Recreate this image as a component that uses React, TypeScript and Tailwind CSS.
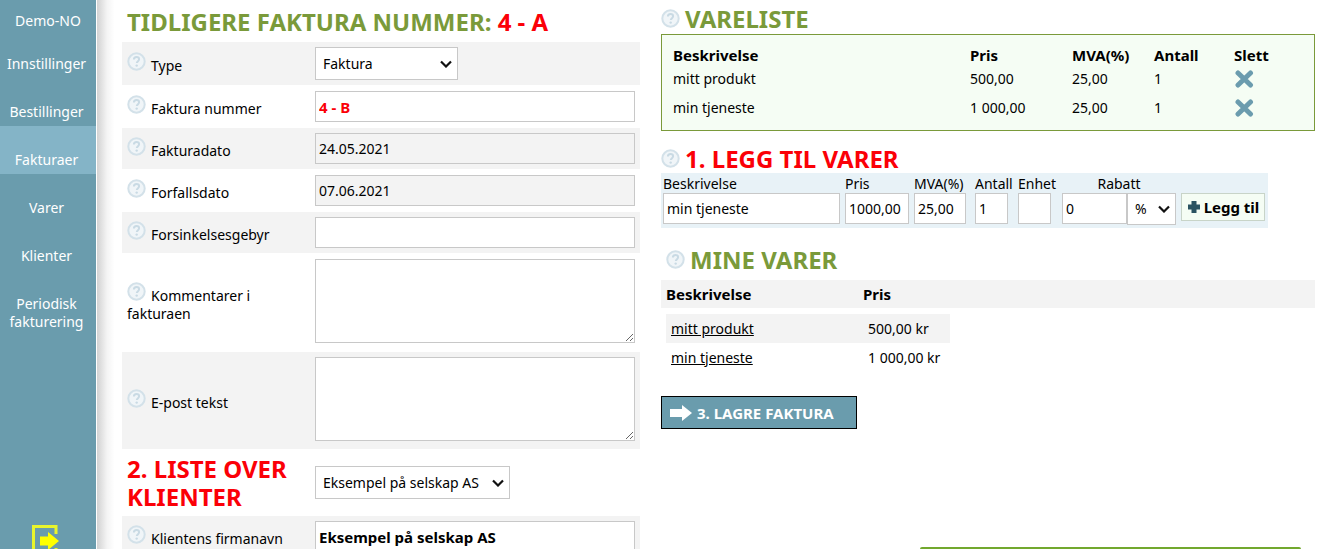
import type { ReactNode } from 'react'

const navItems = ['Innstillinger', 'Bestillinger', 'Fakturaer', 'Varer', 'Klienter', 'Periodisk fakturering']

const invoiceLines = [
  { name: 'mitt produkt', price: '500,00', vat: '25,00', amount: '1' },
  { name: 'min tjeneste', price: '1 000,00', vat: '25,00', amount: '1' },
]

const myProducts = [
  { name: 'mitt produkt', price: '500,00 kr' },
  { name: 'min tjeneste', price: '1 000,00 kr' },
]

const field = 'h-[31px] border border-[#c8c8c8] px-[3px] outline-none'
const area = 'block h-[84px] w-full border border-[#c8c8c8] bg-white px-[3px] outline-none'
const heading = 'text-[24px] leading-[28px] font-bold uppercase'

function HelpIcon() {
  return (
    <svg viewBox="0 0 19 19" className="mr-[5px] inline-block h-[19px] w-[19px] align-baseline" aria-hidden="true">
      <circle cx="9.5" cy="9.5" r="8.2" fill="#f0f5f8" stroke="#d3e1e9" strokeWidth="2" />
      <path
        d="M6.900 7.600c0-1.600 1.100-2.500 2.600-2.500s2.600.8 2.600 2.200c0 1.800-2.300 1.900-2.300 3.800"
        fill="none"
        stroke="#c9dae4"
        strokeWidth="2"
      />
      <circle cx="9.7" cy="13.6" r="1.2" fill="#c9dae4" />
    </svg>
  )
}

function DeleteIcon() {
  return (
    <svg viewBox="0 0 20 20" className="h-5 w-5" aria-hidden="true">
      <path d="M4 4l12.500 12M16.500 4L4 16" stroke="#6b9cae" strokeWidth="5" strokeLinecap="round" />
    </svg>
  )
}

type SelectProps = { id: string; option: string; className: string; label?: string }

function Select({ id, option, className, label }: SelectProps) {
  return (
    <div className={`relative ${className}`}>
      <select
        id={id}
        aria-label={label}
        className="h-full w-full appearance-none border border-[#c8c8c8] bg-white pl-[7px] outline-none"
      >
        <option>{option}</option>
      </select>
      <svg
        viewBox="0 0 12 8"
        className="pointer-events-none absolute inset-y-0 right-[6px] my-auto h-2 w-3"
        aria-hidden="true"
      >
        <path d="M1 1.500l5 5 5-5" fill="none" stroke="#111" strokeWidth="2.2" />
      </svg>
    </div>
  )
}

type RowProps = { id: string; label: string; shaded?: boolean; children: ReactNode }

function FormRow({ id, label, shaded, children }: RowProps) {
  return (
    <div
      className={`grid grid-cols-[188px_1fr] items-center px-[5px] ${shaded ? 'bg-[#f3f3f3] py-[5px]' : 'py-[6px]'}`}
    >
      <label htmlFor={id} className="pr-3">
        <HelpIcon />
        {label}
      </label>
      <div>{children}</div>
    </div>
  )
}

export default function App() {
  return (
    <div className="flex h-screen overflow-hidden bg-white font-['Noto_Sans',sans-serif] text-[14px] leading-[18px] text-black">
      {/* Sidebar */}
      <nav className="flex w-24 shrink-0 flex-col bg-[#6a9cad] text-center text-white">
        <div className="h-[30px] pt-3">Demo-NO</div>
        {navItems.map((item) => (
          <a
            key={item}
            href="#"
            className={`min-h-12 pt-[25px] pr-1 pl-px ${item === 'Fakturaer' ? 'bg-[#84b4c7]' : ''}`}
          >
            {item}
          </a>
        ))}
        <a href="#" aria-label="Logg ut" className="mt-auto mr-1 flex h-6 justify-center overflow-hidden">
          <svg viewBox="0 0 30 32" className="h-8 w-[30px] shrink-0" aria-hidden="true">
            <path d="M25 9V1.500H2.500v29H25V23" fill="none" stroke="#e9f52c" strokeWidth="3" />
            <path d="M9 11.500h8V7l11 9-11 9v-4.500H9z" fill="#ffff00" />
          </svg>
        </a>
      </nav>
      <div className="ml-px w-[25px] shrink-0 bg-linear-to-r from-[#d2d2d2] via-[#f4f4f4] via-40% to-white to-70%" />

      {/* Invoice form */}
      <form className="w-[518px] shrink-0">
        <h1 className={`${heading} h-[42px] px-[5px] pt-2 text-[#7a9a3a]`}>
          Tidligere faktura nummer: <span className="text-[#fb0007]">4 - A</span>
        </h1>
        <FormRow id="type" label="Type" shaded>
          <Select id="type" option="Faktura" className="h-[33px] w-[143px]" />
        </FormRow>
        <FormRow id="number" label="Faktura nummer">
          <input
            id="number"
            defaultValue="4 - B"
            className={`${field} w-full bg-white text-[15px] font-bold text-[#fb0007]`}
          />
        </FormRow>
        <FormRow id="date" label="Fakturadato" shaded>
          <input id="date" defaultValue="24.05.2021" className={`${field} w-full bg-[#f3f3f3]`} />
        </FormRow>
        <FormRow id="due" label="Forfallsdato">
          <input id="due" defaultValue="07.06.2021" className={`${field} w-full bg-[#f3f3f3]`} />
        </FormRow>
        <FormRow id="fee" label="Forsinkelsesgebyr" shaded>
          <input id="fee" className={`${field} w-full bg-white`} />
        </FormRow>
        <FormRow id="comments" label="Kommentarer i fakturaen">
          <textarea id="comments" className={`${area} mb-[3px]`} />
        </FormRow>
        <FormRow id="email" label="E-post tekst" shaded>
          <textarea id="email" className={`${area} mb-[3px]`} />
        </FormRow>
        <div className="grid h-[67px] grid-cols-[188px_1fr] items-center px-[5px]">
          <label htmlFor="client" className={`${heading} text-[#fb0007]`}>
            2. Liste over klienter
          </label>
          <Select id="client" option="Eksempel på selskap AS" className="h-[33px] w-[195px]" />
        </div>
        <FormRow id="company" label="Klientens firmanavn" shaded>
          <input
            id="company"
            defaultValue="Eksempel på selskap AS"
            className={`${field} w-full bg-white text-[15px] font-bold`}
          />
        </FormRow>
      </form>

      {/* Items */}
      <main className="mr-[5px] ml-[21px] flex-1">
        <h2 className={`${heading} h-[34px] pt-[5px] text-[#7a9a3a]`}>
          <HelpIcon />
          Vareliste
        </h2>
        <div className="border border-[#7a9a3a] bg-[#f5fdf4] px-[11px] pt-[10px] pb-2">
          <table className="w-full table-fixed text-left">
            <thead>
              <tr className="h-[19px] text-[15px]">
                <th>Beskrivelse</th>
                <th className="w-[102px]">Pris</th>
                <th className="w-[82px]">MVA(%)</th>
                <th className="w-[80px]">Antall</th>
                <th className="w-[69px]">Slett</th>
              </tr>
            </thead>
            <tbody>
              {invoiceLines.map((line) => (
                <tr key={line.name} className="h-[29px]">
                  <td>{line.name}</td>
                  <td>{line.price}</td>
                  <td>{line.vat}</td>
                  <td>{line.amount}</td>
                  <td>
                    <button type="button" aria-label="Slett" className="block">
                      <DeleteIcon />
                    </button>
                  </td>
                </tr>
              ))}
            </tbody>
          </table>
        </div>

        <h2 className={`${heading} h-[42px] pt-[14px] text-[#fb0007]`}>
          <HelpIcon />
          1. Legg til varer
        </h2>
        <div className="flex h-[55px] w-[607px] bg-[#e8f2f7] px-[2px] pt-[2px]">
          <label className="w-[182px]">
            Beskrivelse
            <input defaultValue="min tjeneste" className={`${field} block w-[177px] bg-white`} />
          </label>
          <label className="w-[69px]">
            Pris
            <input defaultValue="1000,00" className={`${field} block w-[64px] bg-white`} />
          </label>
          <label className="w-[61px]">
            MVA(%)
            <input defaultValue="25,00" className={`${field} block w-[52px] bg-white`} />
          </label>
          <label className="w-[43px]">
            Antall
            <input defaultValue="1" className={`${field} block w-[33px] bg-white`} />
          </label>
          <label className="w-[44px]">
            Enhet
            <input className={`${field} block w-[33px] bg-white`} />
          </label>
          <div className="w-[119px]">
            <label htmlFor="discount" className="block w-[114px] text-center">
              Rabatt
            </label>
            <div className="flex">
              <input id="discount" defaultValue="0" className={`${field} w-[65px] bg-white`} />
              <Select id="discount-unit" label="Rabattype" option="%" className="h-8 w-[49px]" />
            </div>
          </div>
          <button
            type="button"
            className="mt-[18px] flex h-7 w-[84px] items-center justify-center gap-[3px] border border-[#c8d4c8] bg-[#f5fdf4] text-[15px] font-bold"
          >
            <svg viewBox="0 0 14 14" className="h-[14px] w-[14px]" aria-hidden="true">
              <path d="M4.500 1h5v3.500H13v5H9.500V13h-5V9.500H1v-5h3.500z" fill="#2a5361" />
            </svg>
            Legg til
          </button>
        </div>

        <h2 className={`${heading} mt-[18px] h-[34px] pl-[5px] text-[#7a9a3a]`}>
          <HelpIcon />
          Mine varer
        </h2>
        <div className="flex h-7 items-center bg-[#f3f3f3] px-[5px] text-[15px] font-bold">
          <div className="w-[197px]">Beskrivelse</div>
          <div>Pris</div>
        </div>
        <table className="mt-[6px] ml-[5px] w-[284px] table-fixed text-left">
          <tbody>
            {myProducts.map((product) => (
              <tr key={product.name} className="h-[29px] odd:bg-[#f3f3f3]">
                <td className="w-[202px] pl-[5px]">
                  <a href="#" className="underline">
                    {product.name}
                  </a>
                </td>
                <td>{product.price}</td>
              </tr>
            ))}
          </tbody>
        </table>
        <button
          type="button"
          className="mt-6 flex h-[33px] w-[196px] items-center gap-1 border border-black bg-[#6a9cad] pl-[7px] text-[15px] font-bold text-white"
        >
          <svg viewBox="0 0 24 18" className="h-[18px] w-6" aria-hidden="true">
            <path d="M1 5h12V1l10 8-10 8v-4H1z" fill="#fff" />
          </svg>
          3. LAGRE FAKTURA
        </button>
      </main>

      {/* Chat widget edge */}
      <div className="fixed right-[19px] bottom-0 h-[2px] w-[381px] rounded-t bg-[#72a82e]" />
    </div>
  )
}
